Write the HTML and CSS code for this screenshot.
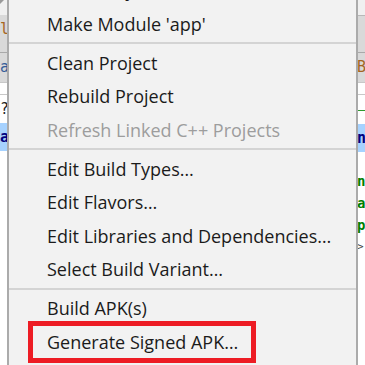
FILE: index.html
```html
<!DOCTYPE html>
<html lang="en">
<head>
  <meta charset="UTF-8">
  <title>Build menu</title>
  <link rel="stylesheet" href="styles.css">
</head>
<body>
  <div class="screen">
    <div class="edge edge-left">
      <div class="band band-light"><span class="corner"></span></div>
      <div class="band band-tab"><span class="glyph glyph-orange">l</span></div>
      <div class="band band-tab band-split"><span class="glyph glyph-blue">a</span></div>
      <div class="band band-blank"></div>
      <div class="band band-code"><span class="glyph">?</span></div>
      <div class="band band-select"><span class="glyph glyph-navy">a</span></div>
      <div class="band band-rest"></div>
    </div>

    <div class="menu">
      <ul class="menu-list">
        <li class="item">Make Project</li>
        <li class="item">Make Module 'app'</li>
        <li class="sep"></li>
        <li class="item">Clean Project</li>
        <li class="item">Rebuild Project</li>
        <li class="item disabled">Refresh Linked C++ Projects</li>
        <li class="sep"></li>
        <li class="item">Edit Build Types…</li>
        <li class="item">Edit Flavors…</li>
        <li class="item">Edit Libraries and Dependencies…</li>
        <li class="item">Select Build Variant…</li>
        <li class="sep"></li>
        <li class="item">Build APK(s)</li>
        <li class="item marked">Generate Signed APK…</li>
      </ul>
    </div>

    <div class="edge edge-right">
      <div class="band band-light"></div>
      <div class="band band-tab band-top"></div>
      <div class="band band-tab band-split"><span class="glyph glyph-orange">B</span></div>
      <div class="band band-blank"></div>
      <div class="band band-code band-green-line"></div>
      <div class="band band-select"><span class="glyph glyph-navy">n</span></div>
      <div class="band band-rest">
        <span class="code green">n</span>
        <span class="code green">a</span>
        <span class="code green">p</span>
        <span class="code arrow">&gt;</span>
      </div>
    </div>
  </div>
</body>
</html>
```

FILE: styles.css
```css
body {
  margin: 0;
  padding: 0;
  background: #ffffff;
  font-family: "Segoe UI", "Open Sans", "Noto Sans", sans-serif;
}

.screen {
  display: flex;
  width: 365px;
  height: 365px;
  overflow: hidden;
}

/* IDE window peeking out on both sides */
.edge {
  width: 7px;
  flex-shrink: 0;
  display: flex;
  flex-direction: column;
  overflow: hidden;
  font-family: "DejaVu Sans Mono", monospace;
}

.band {
  position: relative;
  overflow: hidden;
}

.band-light {
  height: 15px;
  background: #f0f0f0;
}

.corner {
  position: absolute;
  top: 0;
  left: 0;
  border-top: 4px solid #9a9a9a;
  border-right: 4px solid transparent;
}

.band-tab {
  height: 37px;
  background: #d9d9d9;
}

.band-top {
  border-top: 1px solid #b8b8b8;
  height: 36px;
}

.band-split {
  height: 29px;
  border-top: 1px solid #a9a9a9;
}

.band-blank {
  height: 11px;
  background: #ffffff;
  border-top: 1px solid #c8c8c8;
  border-bottom: 1px solid #c8c8c8;
}

.band-code {
  height: 28px;
  background: #ffffff;
}

.band-green-line {
  border-top: 1px solid transparent;
}

.band-green-line::after {
  content: "";
  position: absolute;
  top: 14px;
  left: 0;
  right: 0;
  height: 1px;
  background: #2e9a2e;
}

.band-select {
  height: 28px;
  background: #a6d2ff;
}

.band-rest {
  flex: 1;
  background: #ffffff;
  display: flex;
  flex-direction: column;
  padding-top: 18px;
}

.glyph {
  display: block;
  font-size: 15px;
  line-height: 28px;
  color: #222;
}

.edge-left .glyph {
  text-align: right;
  margin-right: -1px;
}

.edge-right .glyph {
  margin-left: -1px;
}

.glyph-orange { color: #a5651f; }
.glyph-blue { color: #355e9a; }
.glyph-navy { color: #000080; font-weight: bold; }

.code {
  font-size: 14px;
  line-height: 22px;
  height: 22px;
  margin-left: -1px;
  font-weight: bold;
}

.green { color: #008000; }
.arrow { color: #444; font-weight: normal; font-size: 11px; }

/* the popup menu */
.menu {
  width: 347px;
  flex-shrink: 0;
  background: #f2f2f2;
  border-left: 2px solid #ababab;
  border-right: 2px solid #ababab;
}

.menu-list {
  list-style: none;
  margin: -26px 0 0 0;
  padding: 0;
}

.item {
  position: relative;
  height: 33.5px;
  line-height: 33.5px;
  padding-left: 38px;
  font-size: 18px;
  color: #1b1b1b;
  white-space: nowrap;
}

.item.disabled {
  color: #9d9d9d;
}

.sep {
  height: 2px;
  margin: 1px 0 2.5px 0;
  background: #d4d4d4;
}

/* red annotation box drawn over the last entry */
.marked::after {
  content: "";
  position: absolute;
  top: -5px;
  left: 19px;
  width: 228px;
  height: 42px;
  box-sizing: border-box;
  border: 5px solid #ed1c24;
}
```
